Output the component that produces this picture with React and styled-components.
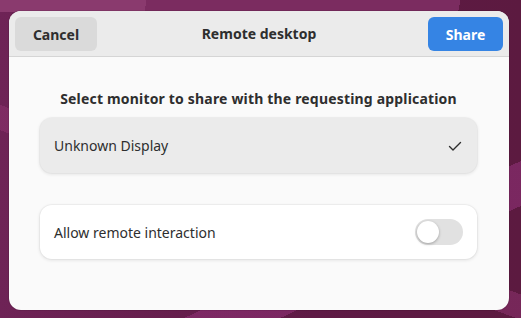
import React from "react";
import styled, { createGlobalStyle } from "styled-components";

const Global = createGlobalStyle`
  html, body { margin: 0; padding: 0; }
  body {
    width: 521px;
    height: 318px;
    overflow: hidden;
    font-family: "Noto Sans", "Open Sans", sans-serif;
    background:
      linear-gradient(100deg, #8a3a6e 0 28%, #7b2c60 28% 88%, transparent 88%) top left / 100% 12px no-repeat,
      linear-gradient(155deg, transparent 0 72%, rgba(135,45,110,0.7) 72% 80%, transparent 80%),
      linear-gradient(200deg, transparent 0 58%, rgba(140,50,110,0.55) 58% 63%, transparent 63%),
      linear-gradient(90deg, #6e2356 0%, #5e1a45 60%, #5c1a40 100%);
  }
  #root { width: 521px; height: 318px; }
`;

const Backdrop = styled.div`
  box-sizing: border-box;
  width: 521px;
  height: 318px;
  padding: 11px 12px 8px 9px;
`;

const Dialog = styled.div`
  width: 500px;
  height: 299px;
  border-radius: 12px;
  background: #fafafa;
  overflow: hidden;
  display: flex;
  flex-direction: column;
  box-shadow: 0 0 0 1px rgba(0,0,0,0.08);
`;

const Header = styled.div`
  height: 46px;
  box-sizing: border-box;
  background: #ebebeb;
  border-bottom: 1px solid #d5d5d5;
  display: grid;
  grid-template-columns: 1fr auto 1fr;
  align-items: start;
  padding: 6px 6px 0 6px;
`;

const Button = styled.button`
  height: 34px;
  width: ${p => p.$w}px;
  border: none;
  border-radius: 6px;
  font-family: inherit;
  font-weight: 700;
  font-size: 14px;
  background: ${p => (p.$primary ? "#3584e4" : "#dadada")};
  color: ${p => (p.$primary ? "#ffffff" : "#2e2e2e")};
  justify-self: ${p => (p.$primary ? "end" : "start")};
  padding: 0;
`;

const Title = styled.div`
  font-weight: 700;
  font-size: 14px;
  color: #2e2e2e;
  line-height: 34px;
`;

const Body = styled.div`
  flex: 1;
  display: flex;
  flex-direction: column;
  padding: 32px 32px 0 31px;
`;

const Label = styled.div`
  text-align: center;
  font-weight: 700;
  font-size: 14px;
  letter-spacing: 0.18px;
  line-height: 20px;
  color: #2e2e2e;
  margin-bottom: 9px;
`;

const Row = styled.div`
  height: ${p => p.$h}px;
  box-sizing: border-box;
  border-radius: 12px;
  background: ${p => (p.$selected ? "#ebebeb" : "#ffffff")};
  box-shadow: 0 0 0 1px rgba(0,0,0,0.03), 0 1px 3px 1px rgba(0,0,0,0.07);
  display: flex;
  align-items: center;
  justify-content: space-between;
  padding: 0 14px;
  margin-bottom: ${p => p.$mb || 0}px;
  font-size: 14px;
  color: #2e2e2e;
`;

const Switch = styled.div`
  width: 48px;
  height: 26px;
  border-radius: 13px;
  background: #e1e1e1;
  display: flex;
  align-items: center;
  padding: 0 2px;
  box-sizing: border-box;
`;

const Knob = styled.div`
  width: 22px;
  height: 22px;
  border-radius: 50%;
  background: #ffffff;
  box-shadow: 0 1px 3px rgba(0,0,0,0.3);
`;

const Check = () => (
  <svg width="16" height="16" viewBox="0 0 16 16">
    <path d="M2.5 8.5 L6 12 L13.5 4.5" fill="none" stroke="#2e2e2e" strokeWidth="1.4" strokeLinecap="round" strokeLinejoin="round" />
  </svg>
);

export default function App() {
  return (
    <>
      <Global />
      <Backdrop>
        <Dialog>
          <Header>
            <Button $w={82}>Cancel</Button>
            <Title>Remote desktop</Title>
            <Button $w={75} $primary>Share</Button>
          </Header>
          <Body>
            <Label>Select monitor to share with the requesting application</Label>
            <Row $h={55} $selected $mb={32}>
              <span>Unknown Display</span>
              <Check />
            </Row>
            <Row $h={54}>
              <span>Allow remote interaction</span>
              <Switch><Knob /></Switch>
            </Row>
          </Body>
        </Dialog>
      </Backdrop>
    </>
  );
}
